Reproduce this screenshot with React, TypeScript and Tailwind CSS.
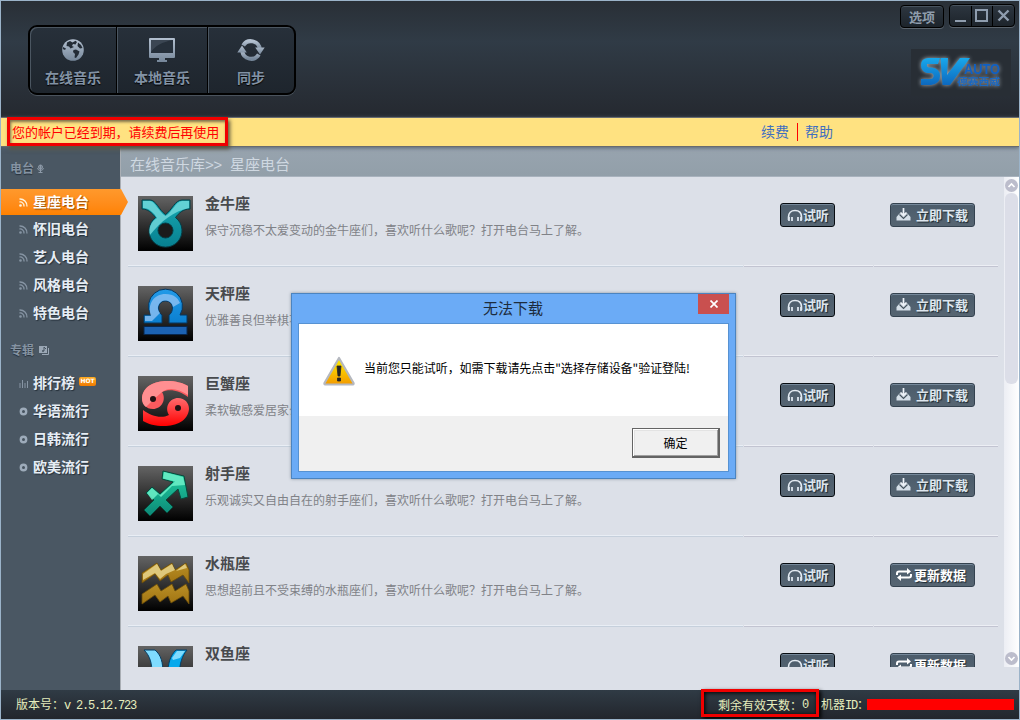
import React from "react";

const cjk = "font-['Noto_Sans_CJK_SC',sans-serif]";

const Mono = ({ children }: { children: React.ReactNode }) => (
  <span className="font-['Liberation_Mono',monospace] text-[12px] tracking-[-1.2px] whitespace-pre">{children}</span>
);

const Taurus = () => (
  <g stroke="#063c45" strokeWidth="1">
    <path d="M4 4H12C18 4 21 14 27.500 18.500C34 14 37 4 44 4H52V13C45 13 41 17 37.500 21.500A16.500 16.500 0 1 1 17.500 21.500C14 17 10 13 4 13Z" fill="url(#teal)" />
    <path d="M5 5H12C17 5 20 15 27.500 20C35 15 38 5 44 5H51V12C36 15 23 25 12 39C10 32 13 26 19 22C16 17 11 12 5 12Z" fill="#7ce0e2" opacity=".75" stroke="none" />
    <circle cx="27.500" cy="34.500" r="7.500" fill="#1b1b1b" />
  </g>
);
const Libra = () => (
  <g>
    <path d="M6 29H13A17 17 0 1 1 42 29H49V37H31V29C36 26 36 15 27.500 15S19 26 24 29V37H6Z" fill="url(#blue)" stroke="#07365f" />
    <path d="M7 30H13C9 18 16 8 27.500 8C36 8 40 12 42 17L35 21C34 15 27 13 23 16C18 20 20 25 22 27L14 35H7Z" fill="#8fc1f2" opacity=".8" />
    <rect x="6" y="40.500" width="43" height="8" fill="#1c62b2" stroke="#07264d" />
  </g>
);
const crab = "M4 22C5 10 17 5 29 5C38 5 45 7 50 10V21C42 15 32 12 24 16C29 24 23 33 15 33C8 33 4 28 4 22Z";
const Cancer = () => (
  <g>
    <path d={crab} fill="#fb5a5e" />
    <path d="M4 22C5 10 17 5 29 5C38 5 45 7 50 10V19C40 12 30 11 24 16L15 24L8 31C5 29 4 26 4 22Z" fill="#ff8f91" />
    <path d={crab} transform="rotate(180 27.500 27.500)" fill="url(#redup)" />
    <circle cx="15" cy="23" r="3" fill="#221214" />
    <circle cx="40" cy="32" r="3" fill="#221214" />
  </g>
);
const Sagittarius = () => (
  <g>
    <path d="M25 5L46 10L50 31L43 33L40 23L28 34L35 41L29 47L22 40L12 50L6 44L16 34L8 27L14 21L22 28L35 16L24 13Z" fill="url(#green)" stroke="#07483a" />
    <path d="M26 6L45 11L47 19L34 20L23 31L20 28L14 34L9 27L14 22L22 29L37 15.500L25 12.500Z" fill="#6df0c8" opacity=".85" />
  </g>
);
const Aquarius = () => (
  <g fill="url(#gold)" stroke="#6b4d08" strokeWidth=".8">
    <path d="M4 17L19 7L23 14L34 7L37 14L48 7L51 14V27L45 19L33 26L30 19L22 25L17 18L4 27Z" />
    <path d="M4 38L19 28L23 35L34 28L37 35L48 28L51 35V48L45 40L33 47L30 40L22 46L17 39L4 48Z" />
    <path d="M5 18L19 8L23 15L34 8L37 14L28 18L22 23L17 17L5 24ZM38 15L47 8L49 12Z" fill="#e3cf86" stroke="none" opacity=".9" />
  </g>
);
const Pisces = () => (
  <g stroke="#063f66">
    <path d="M6 4H17C23 9 25 16 25 28H14C14 17 12 10 6 4Z" fill="#7fdcff" />
    <path d="M38 4H49C44 10 42 17 41 28H30C30 17 32 10 38 4Z" fill="#08a9ec" />
    <path d="M39 5H47L42 12L35 14L34 12Z" fill="#7fdcff" stroke="none" />
  </g>
);

const Defs = () => (
  <svg className="absolute h-0 w-0" aria-hidden="true">
    <defs>
      {[
        ["tile", "#646464", "#000000"],
        ["teal", "#18a9b2", "#077f90"],
        ["blue", "#229ae8", "#0b7fd0"],
        ["redup", "#ff0000", "#ff6b6e"],
        ["green", "#22cfa0", "#0c8877"],
        ["gold", "#b98f26", "#a17412"],
        ["steel", "#b3c0d0", "#76879a"],
        ["pale", "#f4f8fc", "#b9c8d6"],
        ["warn", "#fff000", "#f39a00"],
        ["logo", "#18a8ec", "#0d68be"],
      ].map(([id, a, b]) => (
        <linearGradient key={id} id={id} x1="0" y1="0" x2="0" y2="1">
          <stop offset="0" stopColor={a} />
          <stop offset="1" stopColor={b} />
        </linearGradient>
      ))}
    </defs>
  </svg>
);

const rows = [
  { title: "金牛座", desc: "保守沉稳不太爱变动的金牛座们，喜欢听什么歌呢？打开电台马上了解。", icon: <Taurus />, update: false },
  { title: "天秤座", desc: "优雅善良但举棋不", icon: <Libra />, update: false },
  { title: "巨蟹座", desc: "柔软敏感爱居家公", icon: <Cancer />, update: false },
  { title: "射手座", desc: "乐观诚实又自由自在的射手座们，喜欢听什么歌呢？打开电台马上了解。", icon: <Sagittarius />, update: false },
  { title: "水瓶座", desc: "思想超前且不受束缚的水瓶座们，喜欢听什么歌呢？打开电台马上了解。", icon: <Aquarius />, update: true },
  { title: "双鱼座", desc: "", icon: <Pisces />, update: true },
];

const Headphones = () => (
  <svg width="16" height="13" viewBox="0 0 16 13" fill="none" stroke="#e4ebf2">
    <path d="M1.500 11V8C1.500 4 4 1.500 8 1.500S14.500 4 14.500 8V11" strokeWidth="1.600" />
    <path d="M2 8V12M5 8V12M11 8V12M14 8V12" stroke="#dce5ee" strokeWidth="1.800" />
  </svg>
);
const DownloadIcon = () => (
  <svg width="15" height="13" viewBox="0 0 15 13">
    <path d="M3.500 5.500H5L7.500 8.500L10 5.500H11.500L14.500 9V12.500H.5V9Z" fill="#d5dfe8" />
    <path d="M3.500 6.500L7.500 10.500L11.500 6.500" stroke="#46545f" strokeWidth="1.200" fill="none" />
    <path d="M7.500 0V7M4.500 4.500L7.500 7.500L10.500 4.500" stroke="#eef3f8" strokeWidth="1.700" fill="none" />
  </svg>
);
const UpdateIcon = () => (
  <svg width="16" height="13" viewBox="0 0 16 13" fill="none" stroke="#fff" strokeWidth="2">
    <path d="M1 7V5.500Q1 3.500 3 3.500H12M15 6V7.500Q15 9.500 13 9.500H4" />
    <path d="M11 0L15 3.500L11 6.500ZM5 6.500L1 9.500L5 13Z" fill="#fff" stroke="none" />
  </svg>
);

const Row = ({ r }: { r: (typeof rows)[number] }) => (
  <div className="flex h-[90px] w-[870px] shrink-0 flex-col">
    <div className="flex h-[88px] pt-[19px] pl-[10px]">
      <svg width="55" height="55" viewBox="0 0 55 55" className="shrink-0">
        <rect width="55" height="55" fill="url(#tile)" />
        {r.icon}
      </svg>
      <div className="-mt-px ml-3 w-[575px] whitespace-nowrap">
        <div className="h-[16px] text-[15px] leading-[16px] font-bold text-[#484a4d]">{r.title}</div>
        <div className="mt-[11px] h-[16px] text-[12px] leading-[16px] text-[#808287]">{r.desc}</div>
      </div>
      <div className="mt-[7px] flex h-[24px] w-[55px] items-center rounded-[3px] border border-[#070c11] bg-linear-to-b from-[#4b5c6b] to-[#566572] pl-[6px] text-[13px] leading-none font-bold tracking-[-0.2px] whitespace-nowrap text-[#dde6ee] shadow-[inset_0_1px_0_#75889a]">
        <Headphones />
        <span className="mb-[2px] [text-shadow:1px_1px_1px_#1d2830]">试听</span>
      </div>
      <div className="mt-[7px] ml-[55px] flex h-[24px] w-[85px] items-center rounded-[3px] border border-[#34424f] bg-linear-to-b from-[#4b5c6b] to-[#566572] pl-[5px] text-[13px] leading-none font-bold whitespace-nowrap text-[#dde6ee] shadow-[inset_0_1px_0_#75889a]">
        <span className="mb-px">{r.update ? <UpdateIcon /> : <DownloadIcon />}</span>
        <span className={r.update ? "mb-[2px] ml-[2px] text-white [text-shadow:1px_1px_1px_#1d2830]" : "mb-[2px] ml-[5px] [text-shadow:1px_1px_1px_#1d2830]"}>
          {r.update ? "更新数据" : "立即下载"}
        </span>
      </div>
    </div>
    <div className="flex h-[2px] gap-px">
      <div className="w-[615px] border-t border-b border-t-[#e9eef5] border-b-[#c6d0dc]" />
      <div className="w-[129px] border-t border-b border-t-[#edeff5] border-b-[#c2c4d1]" />
      <div className="w-[124px] border-t border-b border-t-[#edeff5] border-b-[#c2c4d1]" />
    </div>
  </div>
);

const Globe = () => (
  <svg width="24" height="24" viewBox="0 0 24 24">
    <circle cx="12" cy="12" r="10.800" fill="url(#steel)" />
    <path d="M6 4.500L9 3L11.500 4.500L14.500 2.800L16 4L14.500 6.500L12 6L11 8L13 9L9.500 10.500L8 8.500L5.500 8ZM17 4.500L20 7L21.500 10L19 10.500L16.500 8ZM12.500 12L15 11.500L18.500 13.500L17.500 16.500L15 20L13.500 19.500L14 16L12 14ZM2 9L5 10.500L4 12L1.800 11Z" fill="#232c36" />
  </svg>
);
const Monitor = () => (
  <svg width="28" height="26" viewBox="0 0 28 26">
    <path d="M2 1H26Q27 1 27 2V20Q27 21 26 21H17V23H19V25H9V23H11V21H2Q1 21 1 20V2Q1 1 2 1Z" fill="url(#steel)" />
    <rect x="3" y="3" width="22" height="13" fill="#26303b" />
    <path d="M3 15V3H25C14 5 7 9 3 15Z" fill="#3b4653" />
  </svg>
);
const Sync = () => (
  <svg width="28" height="24" viewBox="0 0 28 24" fill="none" stroke="url(#steel)" strokeWidth="4">
    <path d="M6.200 7.500A9 9 0 0 1 22.800 11" />
    <path d="M21.800 16.500A9 9 0 0 1 5.200 13" />
    <path d="M18.200 9.500H27.700L23 16.500ZM.3 14.500H9.800L5 7.500Z" fill="url(#steel)" stroke="none" />
  </svg>
);

const NavButton = ({ icon, label, w }: { icon: React.ReactNode; label: string; w: string }) => (
  <div className={`${w} flex h-full flex-col items-center border-r border-black pt-[10px] shadow-[inset_1px_1px_0_#4b5661] last:border-r-0 first:rounded-l-[7px] last:rounded-r-[7px]`}>
    <div className="flex h-[26px] items-center">{icon}</div>
    <div className="mt-[6px] h-[16px] text-[14px] leading-[16px] font-bold text-[#8292a5] [text-shadow:0_1px_1px_#000]">{label}</div>
  </div>
);

const Rss = ({ active }: { active?: boolean }) => (
  <svg width="9" height="9" viewBox="0 0 9 9" fill="none" stroke={active ? "#fff4dd" : "#8795a4"} strokeWidth="1.300">
    <path d="M.5 1A7 7 0 0 1 8 8.500M.5 4A4 4 0 0 1 5 8.500" />
    <circle cx="1.500" cy="7.500" r=".7" />
  </svg>
);
const Disc = () => (
  <svg width="9" height="9" viewBox="0 0 9 9"><circle cx="4.500" cy="4.500" r="2.700" fill="#46535f" stroke="#9dabba" strokeWidth="2.400" /></svg>
);
const Bars = () => (
  <svg width="9" height="9" viewBox="0 0 9 9" stroke="#8795a4"><path d="M1 4V9M3.500 1V9M6 4V9M8.500 2V9" /></svg>
);

const SideItem = ({ label, icon, hot }: { label: string; icon: React.ReactNode; hot?: boolean }) => (
  <div className="flex h-[28px] items-center pl-[18px]">
    {icon}
    <span className="mb-[2px] ml-[5px] text-[14px] leading-[16px] font-bold text-[#e6edf5] [text-shadow:1px_1px_1px_#25303a]">{label}</span>
    {hot && (
      <span className="mb-[4px] ml-[4px] flex h-[9px] w-[17px] items-center justify-center rounded-[2px] bg-linear-to-b from-[#ffac20] to-[#f07a00] font-['DejaVu_Sans',sans-serif] text-[6px] leading-none font-bold text-white">HOT</span>
    )}
  </div>
);

const Header = () => (
  <header className="flex h-[116px] shrink-0 items-start justify-between bg-linear-to-b from-[#292f36] via-[#303b46] via-35% to-[#252930]">
    <nav className="mt-[24px] ml-[27px] flex h-[70px] w-[268px] rounded-[9px] border-2 border-black bg-linear-to-b from-[#27303a] to-[#1e252d] shadow-[0_1px_0_#4a535d]">
      <NavButton w="w-[87px]" icon={<Globe />} label="在线音乐" />
      <NavButton w="w-[91px]" icon={<Monitor />} label="本地音乐" />
      <NavButton w="w-[86px]" icon={<Sync />} label="同步" />
    </nav>
    <div className="mr-[4px] flex flex-col items-end">
      <div className="mt-[3px] flex h-[24px] items-start">
        <button className="mt-px mr-[5px] h-[23px] w-[44px] rounded-[4px] border border-black bg-linear-to-b from-[#2d3640] to-[#1d242b] text-[13px] leading-[20px] font-bold text-[#8f9dac] shadow-[inset_0_1px_0_#48535e,0_1px_0_#59626b]">选项</button>
        <div className="flex h-[23px] w-[66px] rounded-[4px] border border-black bg-linear-to-b from-[#2d3640] to-[#1d242b] shadow-[inset_0_1px_0_#48535e,0_1px_0_#59626b]">
          <svg width="64" height="21" viewBox="0 0 64 21" fill="none" stroke="#8f9dae">
            <path d="M21.500 1V21M42.500 1V21" stroke="#000" />
            <path d="M5 16H16" strokeWidth="2" />
            <rect x="26" y="5" width="11" height="11" strokeWidth="2" />
            <path d="M48.500 5.500L58.500 15.500M58.500 5.500L48.500 15.500" strokeWidth="2.400" />
          </svg>
        </div>
      </div>
      <div className="mt-[21px] mr-[4px] flex h-[47px] w-[100px] justify-center bg-[#282e35]">
        <svg width="86" height="47" viewBox="0 0 86 47" className="drop-shadow-[0_0_2px_#aab4bc]">
          <path d="M22 9H10Q3 9.500 3 16T9 24H13Q16 24.500 15.500 27.500Q15 30 12 30H3V36H13Q22 35 22 27Q22 19.500 14 18.500H11Q8.500 18 9 15H20Z" fill="url(#logo)" />
          <path d="M22.500 9H30L29 26L42 9H52L32 36H24.500Z" fill="url(#logo)" />
          <text x="46" y="25" className="font-['Liberation_Sans',sans-serif] text-[14px] font-bold" textLength="36" lengthAdjust="spacingAndGlyphs" fill="#1060c4">AUTO</text>
          <text x="39" y="35.500" className="font-['Noto_Sans_CJK_SC',sans-serif] text-[9.500px] font-bold" textLength="43" lengthAdjust="spacingAndGlyphs" fill="#1c68c0">德赛西威</text>
        </svg>
      </div>
    </div>
  </header>
);

const Sidebar = () => (
  <aside className="flex w-[119px] shrink-0 flex-col bg-[#4a5763]">
    <div className="flex h-[42px] items-center gap-[3px] pl-[9px] text-[12px] font-bold text-[#8593a2]">
      <span className="[text-shadow:0_1px_1px_#27313b]">电台</span>
      <svg width="7" height="9" viewBox="0 0 7 9" fill="none" stroke="#8d9aa8"><circle cx="3.500" cy="3" r="2" /><path d="M2 3H5M3.500 1V9M.5 4Q1 6.500 3.500 6.500T6.500 4M1.500 8.500H5.500" /></svg>
    </div>
    <div className="relative z-10 flex h-[26px] w-[127px] items-center bg-linear-to-b from-[#ff992c] to-[#ff8200] pl-[18px] [clip-path:polygon(0_0,120px_0,127px_50%,120px_100%,0_100%)]">
      <Rss active />
      <span className="mb-[3px] ml-[5px] text-[14px] leading-[16px] font-bold text-white [text-shadow:1px_1px_1px_#9d5205]">星座电台</span>
    </div>
    {["怀旧电台", "艺人电台", "风格电台", "特色电台"].map((t) => (
      <SideItem key={t} label={t} icon={<Rss />} />
    ))}
    <div className="mt-[13px] flex h-[20px] items-center gap-[5px] pl-[9px] text-[12px] font-bold text-[#8593a2]">
      <span className="[text-shadow:0_1px_1px_#27313b]">专辑</span>
      <svg width="11" height="9" viewBox="0 0 11 9"><path d="M9.500 2V8.500H3" stroke="#9aa7b5" fill="none" /><rect width="8" height="7" fill="#9aa7b5" /><path d="M5 1V5M5 1L7 3" stroke="#46535f" /><circle cx="4" cy="5" r="1" fill="#46535f" /></svg>
    </div>
    <div className="mt-[9px]">
      <SideItem label="排行榜" icon={<Bars />} hot />
      <SideItem label="华语流行" icon={<Disc />} />
      <SideItem label="日韩流行" icon={<Disc />} />
      <SideItem label="欧美流行" icon={<Disc />} />
    </div>
  </aside>
);

const ScrollBar = () => (
  <div className="flex h-[490px] w-[15px] flex-col items-center bg-linear-to-r from-[#eceef4] to-white pt-[2px]">
    <svg width="13" height="13" viewBox="0 0 13 13"><circle cx="6.500" cy="6.500" r="6.500" fill="#bcbdcc" /><path d="M3.500 8L6.500 5L9.500 8" stroke="#fff" strokeWidth="1.700" fill="none" /></svg>
    <div className="mt-px h-[191px] w-[13px] rounded-[6px] bg-[#dcdee8]" />
    <svg className="mt-auto mb-[2px]" width="13" height="13" viewBox="0 0 13 13"><circle cx="6.500" cy="6.500" r="6.500" fill="#bcbdcc" /><path d="M3.500 5L6.500 8L9.500 5" stroke="#fff" strokeWidth="1.700" fill="none" /></svg>
  </div>
);

const Dialog = () => (
  <div className="absolute top-[292px] left-[290px] z-20 flex h-[186px] w-[445px] flex-col border border-[#4b84c0] bg-[#6babf6] px-[6px] pb-[6px] shadow-[0_0_3px_#8a94a0]">
    <div className="flex h-[29px] shrink-0 items-start">
      <div className="w-[30px]" />
      <div className="flex-1 pt-[4px] text-center text-[15px] leading-[20px] text-[#1d2c3d]">无法下载</div>
      <button className="flex h-[20px] w-[31px] items-center justify-center bg-[#c9504f]">
        <svg width="8" height="8" viewBox="0 0 8 8" stroke="#fff" strokeWidth="1.700"><path d="M.5 .5L7.500 7.500M7.500 .5L.5 7.500" /></svg>
      </button>
    </div>
    <div className="flex flex-1 flex-col border border-[#5792d2] bg-[#f0f0f0]">
      <div className="flex h-[92px] bg-white pl-[24px]">
        <svg className="mt-[32px]" width="32" height="30" viewBox="0 0 32 30">
          <path d="M16 2L30.500 27Q31 28.500 29 28.500H3Q1 28.500 1.500 27Z" fill="url(#warn)" stroke="#b5b8bf" strokeWidth="2.200" strokeLinejoin="round" />
          <path d="M14 10H18L17 20H15ZM14.500 22H17.500V25H14.500Z" fill="#252525" stroke="#252525" strokeWidth=".8" />
        </svg>
        <div className="mt-[36px] ml-[9px] text-[12px] leading-[16px] tracking-[-0.05px] whitespace-nowrap text-black">当前您只能试听，如需下载请先点击"选择存储设备"验证登陆!</div>
      </div>
      <button className="mt-[12px] mr-[8px] h-[30px] w-[88px] self-end border-t border-r-2 border-b-2 border-l border-[#646464] pb-px text-[12px] leading-[25px] text-black shadow-[inset_1px_1px_0_#fff,inset_-1px_-1px_0_#a0a0a0,inset_2px_2px_0_#e3e3e3]">确定</button>
    </div>
  </div>
);

export default function App() {
  return (
    <div className={`${cjk} relative flex h-[720px] w-[1020px] flex-col overflow-hidden border border-[#9bb3c9] bg-[#dce0e8]`}>
      <Defs />
      <Header />
      <div className="z-10 flex h-[30px] shrink-0 items-center border-t border-b border-[#686b70] bg-[#ffe281] shadow-[0_1px_4px_#596673]">
        <div className="mb-px ml-[6px] flex h-[29px] w-[221px] shrink-0 items-center border-3 border-[#f00000] pl-[2px] text-[13px] tracking-[-0.05px] whitespace-nowrap text-[#f00] shadow-[2px_3px_4px_#5c563f,inset_1px_2px_3px_#7d704b]">
          您的帐户已经到期，请续费后再使用
        </div>
        <div className="ml-[533px] flex items-center text-[14px] leading-[18px] text-[#3f6fc0]">
          <span className="mb-[3px]">续费</span>
          <span className="mr-[7px] ml-[8px] h-[18px] w-px shrink-0 bg-[#f00]" />
          <span className="mb-[3px]">帮助</span>
        </div>
      </div>
      <div className="flex h-[543px] shrink-0">
        <Sidebar />
        <main className="flex min-w-0 flex-1 flex-col border-l border-[#a9aeb4] bg-[#dce0e8]">
          <div className="h-[30px] shrink-0 border-b border-[#a8b2bd] bg-linear-to-b from-[#98a4af] to-[#929fa9] pt-[6px] pl-[9px] text-[15px] leading-[22px] whitespace-pre text-[#cfd8e1]">
            在线音乐库<span className="font-['Liberation_Mono',monospace] tracking-[-0.7px]">&gt;&gt; </span>星座电台
          </div>
          <div className="flex h-[490px]">
            <div className="ml-[7px] h-full w-[876px] overflow-hidden">
              {rows.map((r) => (
                <Row key={r.title} r={r} />
              ))}
            </div>
            <ScrollBar />
          </div>
        </main>
      </div>
      <footer className="flex h-[29px] shrink-0 items-center justify-between bg-linear-to-b from-[#303b45] to-[#22262d] text-[12px] text-[#e5edbd]">
        <div className="ml-[15px]">版本号：<Mono>v 2.5.12.723</Mono></div>
        <div className="mr-[5px] flex h-full items-center whitespace-nowrap">
          <div className="mb-[3px] flex h-[28px] w-[118px] items-center border-3 border-[#f00000] pt-[3px] pl-[14px] shadow-[2px_2px_4px_#000,inset_1px_1px_4px_#000]">
            剩余有效天数：<Mono>0</Mono>
          </div>
          <div className="ml-[2px] w-[46px]">机器<Mono>ID</Mono>：</div>
          <div className="h-[11px] w-[147px] bg-[#f00]" />
        </div>
      </footer>
      <Dialog />
    </div>
  );
}
